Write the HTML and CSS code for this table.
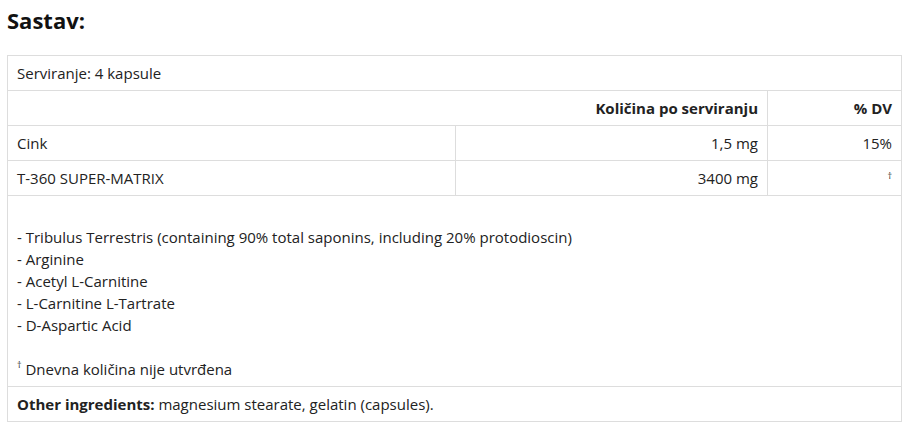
FILE: index.html
```html
<!DOCTYPE html>
<html lang="hr">
  <head>
    <meta charset="UTF-8" />
    <meta name="viewport" content="width=device-width, initial-scale=1.0" />
    <title>Sastav</title>
    <link rel="stylesheet" href="styles.css">
  </head>
  <body>
    <div class="sastav">
      <h2 class="title">Sastav:</h2>
      <table class="facts">
        <colgroup>
          <col class="col-name" />
          <col class="col-amount" />
          <col />
        </colgroup>
        <tr>
          <td colspan="3">Serviranje: 4 kapsule</td>
        </tr>
        <tr class="head">
          <th colspan="2" class="right">Količina po serviranju</th>
          <th class="right">% DV</th>
        </tr>
        <tr>
          <td>Cink</td>
          <td class="right">1,5 mg</td>
          <td class="right">15%</td>
        </tr>
        <tr>
          <td>T-360 SUPER-MATRIX</td>
          <td class="right">3400 mg</td>
          <td class="right"><span class="dagger">†</span></td>
        </tr>
        <tr>
          <td colspan="3" class="note">
            <br />
            - Tribulus Terrestris (containing 90% total saponins, including 20% protodioscin)<br />
            - Arginine<br />
            - Acetyl L-Carnitine<br />
            - L-Carnitine L-Tartrate<br />
            - D-Aspartic Acid<br />
            <br />
            <span class="dagger">†</span> Dnevna količina nije utvrđena
          </td>
        </tr>
        <tr>
          <td colspan="3"><b>Other ingredients:</b> magnesium stearate, gelatin (capsules).</td>
        </tr>
      </table>
    </div>
  </body>
</html>
```

FILE: styles.css
```css
body {
  margin: 0;
  font-family: "Open Sans", Arial, sans-serif;
  color: #222;
  background-color: #fff;
}
.sastav {
  padding: 6px 8px 0 7px;
}
.title {
  margin: 0 0 21px 0;
  font-size: 22px;
  line-height: 28px;
  font-weight: 700;
  color: #111;
}
.facts {
  width: 895px;
  table-layout: fixed;
  border-collapse: collapse;
  font-size: 15px;
  line-height: 18px;
}
.col-name {
  width: 448px;
}
.col-amount {
  width: 312px;
}
.facts td,
.facts th {
  border: 1px solid #ddd;
  padding: 8px 9px;
  text-align: left;
}
.facts th {
  font-weight: 700;
}
.facts .right {
  text-align: right;
}
.facts .note {
  padding-top: 8px;
  padding-bottom: 6px;
  line-height: 22px;
}
.dagger {
  font-size: 9px;
  vertical-align: top;
  line-height: 14px;
  color: #222;
}
```
